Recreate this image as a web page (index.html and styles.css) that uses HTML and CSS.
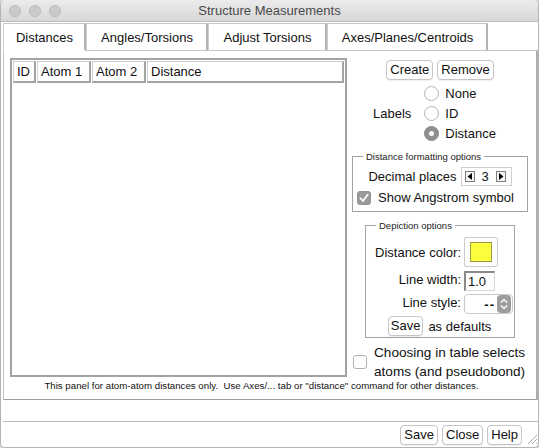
FILE: index.html
```html
<!DOCTYPE html>
<html>
<head>
<meta charset="utf-8">
<title>Structure Measurements</title>
<link rel="stylesheet" href="styles.css">
</head>
<body>
<div class="window">
  <div class="titlebar">
    <div class="lights"><span class="light"></span><span class="light"></span><span class="light"></span></div>
    <div class="title">Structure Measurements</div>
    <div></div>
  </div>
  <div class="tabs">
    <div class="tab active tab-dist">Distances</div>
    <div class="tab tab-ang">Angles/Torsions</div>
    <div class="tab tab-adj">Adjust Torsions</div>
    <div class="tab tab-axes">Axes/Planes/Centroids</div>
    <div class="tab-fill"></div>
  </div>
  <div class="panel">
    <div class="main">
      <div class="table">
        <div class="thead">
          <div class="th th-id">ID</div>
          <div class="th th-atom">Atom 1</div>
          <div class="th th-atom">Atom 2</div>
          <div class="th th-dist">Distance</div>
        </div>
      </div>
      <div class="side">
        <div class="btn-row"><button class="btn">Create</button><button class="btn">Remove</button></div>
        <div class="labels">
          <span class="labels-title">Labels</span>
          <div class="radios">
            <div class="radio-row"><span class="radio"></span>None</div>
            <div class="radio-row"><span class="radio"></span>ID</div>
            <div class="radio-row"><span class="radio on"></span>Distance</div>
          </div>
        </div>
        <fieldset class="group fmt">
          <legend>Distance formatting options</legend>
          <div class="dec-row">
            <span>Decimal places</span>
            <div class="spinner">
              <svg class="arrow" width="10" height="11" viewBox="0 0 10 11"><rect x="0.5" y="0.5" width="9" height="10" fill="#f6f6f6" stroke="#7c7c7c"/><path d="M2.5 5.5 L7 2 L7 9 Z" fill="#000"/></svg>
              <span class="val">3</span>
              <svg class="arrow" width="10" height="11" viewBox="0 0 10 11"><rect x="0.5" y="0.5" width="9" height="10" fill="#f6f6f6" stroke="#7c7c7c"/><path d="M7.5 5.5 L3 2 L3 9 Z" fill="#000"/></svg>
            </div>
          </div>
          <div class="check-row">
            <span class="checkbox checked"><svg width="14" height="14" viewBox="0 0 14 14"><path d="M3.3 7.2 L6 10 L10.8 3.6" fill="none" stroke="#fff" stroke-width="1.7" stroke-linecap="round" stroke-linejoin="round"/></svg></span>
            <span>Show Angstrom symbol</span>
          </div>
        </fieldset>
        <fieldset class="group depict">
          <legend>Depiction options</legend>
          <div class="depict-grid">
            <span class="lbl">Distance color:</span>
            <div class="swatch"><span class="swatch-fill"></span></div>
            <span class="lbl">Line width:</span>
            <div class="input">1.0</div>
            <span class="lbl">Line style:</span>
            <div class="select">
              <span class="dashes">--</span>
              <svg class="stepper" width="14" height="18" viewBox="0 0 14 18"><rect x="0" y="0" width="14" height="18" rx="4" fill="#9d9d9d"/><path d="M4.2 7.2 L7 4.6 L9.8 7.2 M4.2 10.8 L7 13.4 L9.8 10.8" fill="none" stroke="#fff" stroke-width="1.3" stroke-linecap="round" stroke-linejoin="round"/></svg>
            </div>
            <div class="save-row"><button class="btn">Save</button><span>as defaults</span></div>
          </div>
        </fieldset>
        <div class="choose-row">
          <span class="checkbox"></span>
          <span class="choose-text">Choosing in table selects<br>atoms (and pseudobond)</span>
        </div>
      </div>
    </div>
    <div class="note">This panel for atom-atom distances only.&nbsp; Use Axes/... tab or "distance" command for other distances.</div>
  </div>
  <div class="blank"></div>
  <div class="footer">
    <button class="btn">Save</button>
    <button class="btn">Close</button>
    <button class="btn">Help</button>
    <svg class="grip" width="14" height="14" viewBox="0 0 14 14"><path d="M13 4 L4 13 M13 8 L8 13 M13 12 L12 13" stroke="#a8a8a8" stroke-width="1"/></svg>
  </div>
</div>
</body>
</html>
```

FILE: styles.css
```css
* { box-sizing: border-box; }
html, body { margin: 0; padding: 0; }
body {
  width: 539px;
  height: 448px;
  overflow: hidden;
  background: #d6d6d6;
  font-family: "Liberation Sans", Arial, sans-serif;
  font-size: 13px;
  color: #111;
}
.window {
  width: 539px;
  height: 448px;
  background: #fff;
  border: 1px solid #b4b4b4;
  border-top: none;
  border-radius: 5px;
  display: flex;
  flex-direction: column;
  overflow: hidden;
}
.titlebar {
  flex: none;
  height: 22px;
  background: linear-gradient(#ececec, #d7d7d7);
  border-bottom: 1px solid #bcbcbc;
  display: grid;
  grid-template-columns: 1fr auto 1fr;
  align-items: center;
}
.lights { display: flex; gap: 8px; padding-left: 8px; }
.light {
  width: 12px; height: 12px; border-radius: 50%;
  background: #cbcbcb;
  border: 1px solid #b9b9b9;
}
.title { color: #4a4a4a; font-size: 13px; }

.tabs {
  flex: none;
  display: flex;
  height: 29px;
  padding-top: 1px;
  margin-left: 2px;
}
.tab {
  flex: none;
  height: 28px;
  display: flex;
  align-items: center;
  justify-content: center;
  border-top: 1px solid #c8c8c8;
  border-left: 1px solid #cfcfcf;
  border-right: 2px solid #b2b2b2;
  border-bottom: 1px solid #c4c4c4;
  white-space: nowrap;
  padding-left: 1px;
}
.tab-dist { width: 83px; }
.tab-ang { width: 122px; }
.tab-adj { width: 119px; }
.tab-axes { width: 161px; }
.tab.active { border-bottom-color: #fff; }
.tab-fill { flex: 1; border-bottom: 1px solid #c4c4c4; }

.panel {
  flex: none;
  margin-left: 2px;
  width: 535px;
  height: 349px;
  border-left: 1px solid #c4c4c4;
  border-right: 2px solid #adadad;
  border-bottom: 1px solid #9c9c9c;
  padding: 7px 7px 0 6px;
}
.main { display: flex; height: 319px; }
.table {
  width: 337px;
  height: 319px;
  border: 2px solid #a3a3a3;
  padding: 1px 1px 0 1px;
}
.thead { display: flex; gap: 1px; }
.th {
  height: 22px;
  display: flex;
  align-items: center;
  padding-left: 3px;
  border-top: 1px solid #cdcdcd;
  border-left: 1px solid #d4d4d4;
  border-right: 2px solid #a4a4a4;
  border-bottom: 2px solid #a4a4a4;
}
.th-id { width: 23px; }
.th-atom { width: 54px; }
.th-dist { flex: 1; }

.side {
  width: 176px;
  margin-left: 5px;
  display: flex;
  flex-direction: column;
}
.btn {
  font: inherit;
  color: #111;
  height: 20px;
  padding: 0 3px;
  background: #fff;
  border: 1px solid #c5c5c5;
  border-radius: 4px;
  box-shadow: 0 1px 0 rgba(0,0,0,0.06);
  line-height: 18px;
  margin: 0;
}
.btn-row { display: flex; justify-content: center; gap: 4px; margin-top: 2px; }
.labels { display: flex; align-items: center; padding-left: 21px; margin-top: 3px; }
.labels-title { margin-right: 13px; }
.radios { display: flex; flex-direction: column; }
.radio-row { display: flex; align-items: center; height: 20px; gap: 6px; }
.radio {
  width: 15px; height: 15px; border-radius: 50%;
  border: 1px solid #b3b3b3; background: #fff;
  display: flex; align-items: center; justify-content: center;
}
.radio.on { background: #8f8f8f; border-color: #888; }
.radio.on::after { content: ""; width: 5px; height: 5px; border-radius: 50%; background: #fff; }

.group {
  margin: 0;
  border: 1px solid #a2a2a2;
  min-width: 0;
}
.group legend {
  font-size: 9.5px;
  line-height: 11px;
  padding: 0 3px;
  color: #222;
}
.fmt { margin-top: 8px; padding: 4px 4px 3px 10px; }
.fmt legend { margin-left: 0; }
.dec-row { display: flex; align-items: center; justify-content: center; gap: 4px; height: 20px; margin-left: -6px; }
.spinner {
  display: flex; align-items: center;
  width: 51px; height: 19px;
  border: 1px solid #cfcfcf;
  padding-left: 3px;
}
.spinner .val { width: 21px; text-align: center; }
.arrow { display: block; }
.check-row { display: flex; align-items: center; gap: 7px; height: 21px; margin-left: -6px; margin-top: 1px; white-space: nowrap; }
.checkbox {
  width: 14px; height: 14px; border-radius: 3px;
  border: 1px solid #b0b0b0; background: #fff;
  display: flex; flex: none;
}
.checkbox.checked { background: #999; border-color: #939393; }
.checkbox svg { display: block; margin: -1px; }

.depict {
  width: 150px;
  margin: 8px auto 0;
  padding: 6px 0 1px 0;
}
.depict legend { margin-left: 10px; }
.depict-grid {
  display: grid;
  grid-template-columns: 95px 49px;
  column-gap: 3px;
  align-items: center;
}
.lbl { text-align: right; white-space: nowrap; }
.swatch {
  width: 34px; height: 30px;
  border: 1px solid #c9c9c9;
  border-radius: 2px;
  display: flex; align-items: center; justify-content: center;
}
.swatch-fill {
  width: 22px; height: 20px;
  background: #fdfd3f;
  border: 1px solid #9c9c42;
}
.input {
  margin-top: 4px;
  width: 31px; height: 20px;
  border-top: 2px solid #8a8a8a;
  border-left: 2px solid #8a8a8a;
  border-right: 1px solid #d8d8d8;
  border-bottom: 1px solid #d8d8d8;
  padding-left: 2px;
  line-height: 17px;
}
.select {
  margin-top: 3px;
  width: 49px; height: 20px;
  border: 1px solid #cacaca;
  border-radius: 4px;
  display: flex; align-items: center; justify-content: flex-end;
  padding-right: 1px;
}
.dashes { font-weight: bold; letter-spacing: 1px; margin-right: 2px; }
.stepper { display: block; }
.save-row {
  grid-column: 1 / 3;
  display: flex; align-items: center; justify-content: center; gap: 5px;
  margin-top: 2px;
}
.save-row .btn { height: 20px; padding: 0 2px; }

.choose-row { display: flex; align-items: center; gap: 7px; margin-top: 5px; padding-left: 1px; }
.choose-text { font-size: 13.6px; line-height: 19px; white-space: nowrap; }

.note {
  margin-top: 3px;
  font-size: 9.7px;
  line-height: 12px;
  text-align: center;
  padding-right: 16px;
  white-space: nowrap;
}
.blank { flex: none; height: 22px; border-bottom: 1px solid #bdbdbd; margin-left: 2px; }
.footer {
  display: flex;
  justify-content: flex-end;
  align-items: flex-start;
  gap: 4px;
  padding-top: 3px;
}
.footer .btn { padding: 0 3px; }
.grip { margin-top: 6px; margin-left: -2px; margin-right: 0; }
```
